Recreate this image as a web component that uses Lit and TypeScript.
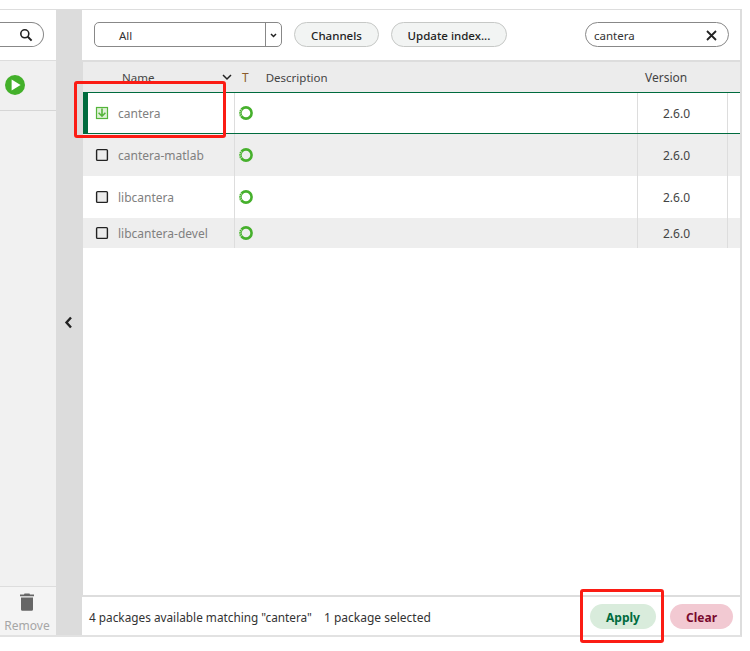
import { LitElement, css, html, svg } from 'lit';
import { customElement } from 'lit/decorators.js';
import { classMap } from 'lit/directives/class-map.js';

const packages = [
  { name: 'cantera', version: '2.6.0', selected: true, alt: false, tall: true },
  { name: 'cantera-matlab', version: '2.6.0', selected: false, alt: true, tall: true },
  { name: 'libcantera', version: '2.6.0', selected: false, alt: false, tall: true },
  { name: 'libcantera-devel', version: '2.6.0', selected: false, alt: true, tall: false },
];

const ring = html`<svg class="ring" width="16" height="16" viewBox="0 0 16 16" fill="none">
  <circle cx="8" cy="8" r="5.6" stroke="#46b02c" stroke-width="2.6" />
  <path d="M3 11.4A6 6 0 0 1 3.4 4.2" stroke="#d8eed2" stroke-width="2.6" stroke-dasharray="0.8 1.4" />
</svg>`;

const installMark = html`<svg width="14" height="14" viewBox="0 0 14 14" fill="none">
  <rect x="1.5" y="1.5" width="11" height="11" fill="#dff0d8" stroke="#55b53a" stroke-width="1.2" />
  <path d="M7 2.5V10M3.6 6.8L7 10.2L10.4 6.8" stroke="#55b53a" stroke-width="1.6" />
</svg>`;

const emptyMark = html`<svg width="14" height="14" viewBox="0 0 14 14" fill="none">
  <rect x="1.6" y="1.6" width="10.8" height="10.8" rx="1" fill="#ececec" stroke="#222" stroke-width="1.4" />
</svg>`;

const chevron = (d: string, w: number, h: number, sw: number) => html`<svg width=${w} height=${h} viewBox="0 0 ${w} ${h}" fill="none">
  ${svg`<path d=${d} stroke="#222" stroke-width=${sw} />`}
</svg>`;

@customElement('app-root')
export class AppRoot extends LitElement {
  static styles = css`
    :host {
      display: block;
      position: relative;
      width: 750px;
      height: 651px;
      overflow: hidden;
      background: #fff;
      font-family: 'Noto Sans', 'Open Sans', sans-serif;
      font-size: 11.5px;
      color: #333;
    }
    .frame {
      box-sizing: border-box;
      display: grid;
      grid-template-columns: 56px 26px 1fr;
      width: 742px;
      height: 628px;
      margin-top: 9px;
      border-top: 1px solid #ddd;
      border-bottom: 2px solid #e2e2e2;
      border-right: 2px solid #ddd;
    }
    .side {
      display: flex;
      flex-direction: column;
      background: #f1f1f1;
      min-width: 0;
    }
    .side-search {
      height: 51px;
      box-sizing: border-box;
      background: #fff;
      border-bottom: 1px solid #ddd;
      padding-top: 12px;
    }
    .side-pill {
      box-sizing: border-box;
      width: 44px;
      height: 25px;
      border: 1px solid #888;
      border-left: 0;
      border-radius: 0 13px 13px 0;
      display: flex;
      justify-content: flex-end;
      align-items: center;
      padding: 1px 10px 0 0;
    }
    .side-env {
      height: 50px;
      box-sizing: border-box;
      background: #f0f0f0;
      border-bottom: 1px solid #d6d6d6;
      padding: 14px 0 0 5px;
    }
    .side-fill {
      flex: 1;
    }
    .side-remove {
      height: 49px;
      box-sizing: border-box;
      border-top: 1px solid #ddd;
      background: #f4f4f4;
      display: flex;
      flex-direction: column;
      align-items: center;
      padding: 6px 2px 0 0;
      color: #a6a6a6;
      font-size: 12px;
      line-height: 14px;
    }
    .side-remove svg {
      margin-bottom: 8px;
    }
    .collapse {
      background: #dcdcdc;
      display: flex;
      align-items: center;
      justify-content: center;
      padding-right: 1px;
    }
    .main {
      display: flex;
      flex-direction: column;
      min-width: 0;
      background: #fff;
    }
    .toolbar {
      box-sizing: border-box;
      display: flex;
      align-items: flex-start;
      padding: 12px 0 0 12px;
      gap: 12px;
      flex: none;
      border-bottom: 2px solid #ddd;
      height: 52px;
    }
    .select {
      box-sizing: border-box;
      width: 188px;
      height: 25px;
      border: 1px solid #888;
      border-radius: 5px;
      display: flex;
      align-items: center;
    }
    .select-value {
      flex: 1;
      padding: 2px 0 0 24px;
      color: #333;
    }
    .select-arrow {
      box-sizing: border-box;
      width: 16px;
      height: 100%;
      border-left: 1px solid #888;
      display: flex;
      align-items: center;
      justify-content: center;
      padding-top: 1px;
    }
    .btn {
      box-sizing: border-box;
      height: 25px;
      border: 1px solid #c6c8c6;
      border-radius: 13px;
      background: #f2f4f3;
      display: flex;
      align-items: center;
      justify-content: center;
      padding-top: 2px;
      font-weight: 500;
      color: #222;
    }
    .btn-channels {
      width: 85px;
    }
    .btn-update {
      width: 116px;
    }
    .filter {
      box-sizing: border-box;
      width: 144px;
      height: 25px;
      margin-left: 66px;
      border: 1px solid #888;
      border-radius: 13px;
      display: flex;
      align-items: center;
      justify-content: space-between;
      padding: 1px 11px 0 8px;
      color: #333;
    }
    .table {
      flex: 1;
      min-height: 0;
      display: flex;
      flex-direction: column;
      border-left: 1px solid #dcdcdc;
    }
    .head,
    .row {
      display: grid;
      grid-template-columns: 152px 403px 90px 1fr;
    }
    .head {
      height: 30px;
      background: #ececec;
      align-items: center;
      flex: none;
    }
    .head-name {
      display: flex;
      justify-content: space-between;
      align-items: center;
      padding: 1px 3px 0 39px;
      color: #444;
    }
    .head-desc {
      display: flex;
      align-items: center;
      gap: 17px;
      padding: 1px 0 0 7px;
      color: #444;
    }
    .head-t {
      color: #8a5a2c;
      font-size: 12px;
    }
    .head-ver {
      padding: 1px 0 0 7px;
      font-size: 12px;
      color: #444;
    }
    .row {
      height: 42px;
      box-sizing: border-box;
      flex: none;
    }
    .row.short {
      height: 30px;
    }
    .row.alt {
      background: #eee;
    }
    .row.selected {
      border-top: 1px solid #006b3e;
      border-bottom: 1px solid #006b3e;
      background: #fff;
      box-shadow: inset 5px 0 0 #006b3e;
    }
    .cell {
      display: flex;
      align-items: center;
      min-width: 0;
      border-right: 1px solid #ddd;
    }
    .cell:last-child {
      border-right: 0;
    }
    .cell-name {
      gap: 9px;
      padding-left: 12px;
      font-size: 12px;
      color: #808080;
    }
    .cell-status {
      padding-left: 3px;
    }
    .cell-version {
      justify-content: center;
      padding-right: 12px;
      font-size: 12px;
      color: #444;
    }
    .ring {
      display: block;
      margin-bottom: 1px;
    }
    .footer {
      box-sizing: border-box;
      height: 40px;
      flex: none;
      border-top: 2px solid #ddd;
      display: flex;
      align-items: center;
      padding: 0 7px 0 7px;
      color: #333;
    }
    .status {
      padding-top: 2px;
      font-size: 11.8px;
    }
    .status + .status {
      margin-left: 12px;
      font-size: 12px;
    }
    .actions {
      margin-left: auto;
      display: flex;
      gap: 14px;
    }
    .action {
      box-sizing: border-box;
      height: 25px;
      border-radius: 13px;
      display: flex;
      align-items: center;
      justify-content: center;
      padding-top: 2px;
      font-size: 12px;
      font-weight: 700;
    }
    .apply {
      width: 66px;
      background: #d9ecdc;
      color: #006b3e;
    }
    .clear {
      width: 63px;
      background: #f2c9d2;
      color: #7a0a2e;
    }
    .mark {
      position: absolute;
      box-sizing: border-box;
      border: 3px solid #fb1c14;
      border-radius: 3px;
      pointer-events: none;
    }
    .mark-row {
      left: 74px;
      top: 81px;
      width: 152px;
      height: 57px;
    }
    .mark-apply {
      left: 580px;
      top: 589px;
      width: 84px;
      height: 54px;
    }
  `;

  render() {
    return html`
      <div class="frame">
        <div class="side">
          <div class="side-search">
            <div class="side-pill">
              <svg width="14" height="14" viewBox="0 0 14 14" fill="none">
                <circle cx="5.8" cy="5.8" r="4" stroke="#222" stroke-width="1.6" />
                <path d="M8.8 8.8L12.6 12.6" stroke="#222" stroke-width="2" />
              </svg>
            </div>
          </div>
          <div class="side-env">
            <svg width="20" height="20" viewBox="0 0 20 20">
              <circle cx="10" cy="10" r="10" fill="#43b02a" />
              <path d="M6.6 4.6L15.6 10L6.6 15.4Z" fill="#fff" />
            </svg>
          </div>
          <div class="side-fill"></div>
          <div class="side-remove">
            <svg width="14" height="18" viewBox="0 0 14 18">
              <path d="M4.5 0.5H9.5L10 1.6H14V3.2H0V1.6H4Z" fill="#666" />
              <path d="M1 4.4H13V16.4A1.4 1.4 0 0 1 11.6 17.8H2.4A1.4 1.4 0 0 1 1 16.4Z" fill="#666" />
            </svg>
            <span>Remove</span>
          </div>
        </div>
        <div class="collapse">${chevron('M7 1.5L2.5 6.5L7 11.5', 9, 13, 2.4)}</div>
        <div class="main">
          <div class="toolbar">
            <div class="select">
              <span class="select-value">All</span>
              <span class="select-arrow">${chevron('M1 1L3.5 3.5L6 1', 7, 5, 1.5)}</span>
            </div>
            <div class="btn btn-channels">Channels</div>
            <div class="btn btn-update">Update index...</div>
            <div class="filter">
              <span>cantera</span>
              <svg width="11" height="11" viewBox="0 0 11 11" fill="none">
                <path d="M1 1L10 10M10 1L1 10" stroke="#222" stroke-width="1.8" />
              </svg>
            </div>
          </div>
          <div class="table">
            <div class="head">
              <div class="head-name"><span>Name</span>${chevron('M1 1L5 5L9 1', 10, 7, 1.5)}</div>
              <div class="head-desc"><span class="head-t">T</span><span>Description</span></div>
              <div class="head-ver">Version</div>
              <div></div>
            </div>
            ${packages.map(
              (p) => html`
                <div class=${classMap({ row: true, selected: p.selected, alt: p.alt, short: !p.tall })}>
                  <div class="cell cell-name">${p.selected ? installMark : emptyMark}<span>${p.name}</span></div>
                  <div class="cell cell-status">${ring}</div>
                  <div class="cell cell-version">${p.version}</div>
                  <div class="cell"></div>
                </div>
              `,
            )}
          </div>
          <div class="footer">
            <span class="status">4 packages available matching "cantera"</span>
            <span class="status">1 package selected</span>
            <div class="actions">
              <div class="action apply">Apply</div>
              <div class="action clear">Clear</div>
            </div>
          </div>
        </div>
      </div>
      <div class="mark mark-row"></div>
      <div class="mark mark-apply"></div>
    `;
  }
}
